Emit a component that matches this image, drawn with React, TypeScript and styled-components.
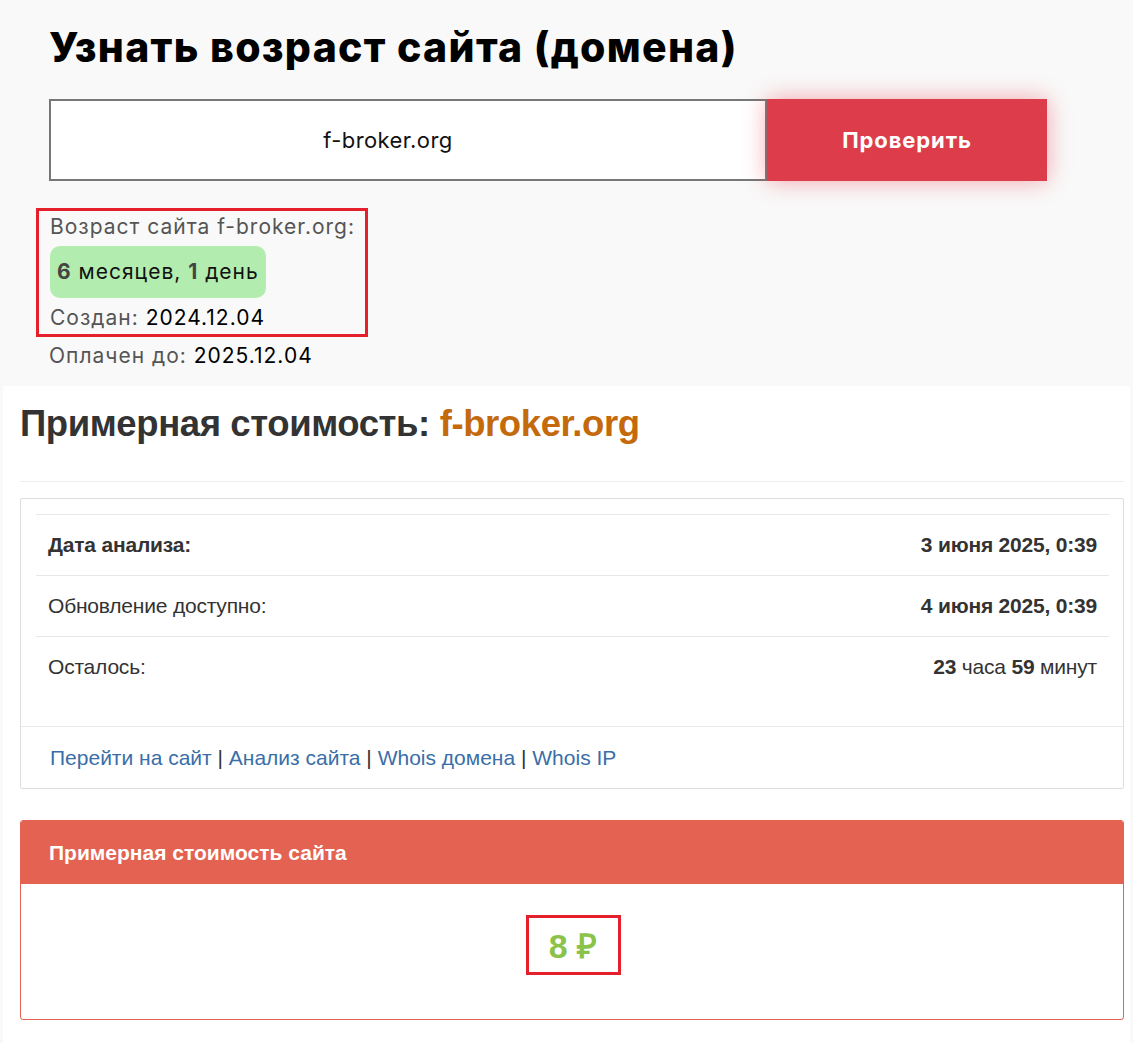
import * as React from 'react'
import styled, { createGlobalStyle } from 'styled-components';

const GlobalStyle = createGlobalStyle`
    body {
        margin: 0;
        background: #f9f9f9;
        font-family: Inter, "Open Sans", sans-serif;
    }
`;

const Page = styled.div`
    width: 1133px;
    overflow: hidden;
`;

// верхняя часть: проверка возраста
const TopSection = styled.div`
    padding: 21px 0 0 49px;
    height: 365px;
`;

const Title = styled.h1`
    margin: 0;
    font-size: 41px;
    line-height: 52px;
    font-weight: 800;
    color: #000;
    letter-spacing: 1.3px;
`;

const FormRow = styled.div`
    display: flex;
    margin-top: 26px;
    height: 82px;
`;

const DomainInput = styled.div`
    box-sizing: border-box;
    width: 718px;
    border: 2px solid #777;
    background: #fff;
    display: flex;
    align-items: center;
    justify-content: center;
    padding-right: 40px;
    font-size: 22px;
    letter-spacing: 0.4px;
    color: #111;
`;

const CheckButton = styled.button`
    width: 280px;
    border: none;
    background: #dd3c4b;
    color: #fff;
    font-family: inherit;
    font-size: 22px;
    font-weight: 700;
    letter-spacing: 0.9px;
    box-shadow: 0 0 22px rgba(235, 60, 75, 0.45);
`;

const AgeBox = styled.div`
    margin: 27px 0 0 -13px;
    width: 332px;
    box-sizing: border-box;
    border: 3px solid #e3202c;
    padding: 0 0 0 11px;
`;

const Line = styled.div`
    font-size: 21px;
    line-height: 32px;
    letter-spacing: 1px;
    color: #555;
`;

const Value = styled.span`
    color: #000;
`;

const AgePill = styled.div`
    display: inline-block;
    margin: 3px 0 4px;
    padding: 0 7px;
    height: 52px;
    line-height: 52px;
    background: #b3ecaf;
    border-radius: 10px;
    font-size: 21px;
    letter-spacing: 1px;
    color: #111;
`;

const Num = styled.b`
    color: #444;
`;

const PaidLine = styled(Line)`
    margin-top: 3px;
`;

// нижняя часть: стоимость сайта
const BottomPanel = styled.div`
    margin-left: 3px;
    width: 1127px;
    background: #fff;
    padding: 16px 6px 40px 17px;
    box-sizing: border-box;
    font-family: "Liberation Sans", Arial, sans-serif;
    color: #333;
`;

const PriceHeading = styled.h2`
    margin: 0;
    font-size: 36.5px;
    line-height: 44px;
    font-weight: 700;
    color: #333;
    letter-spacing: -0.4px;
    padding-bottom: 35px;
    border-bottom: 1px solid #eee;
`;

const Domain = styled.span`
    color: #c46a0d;
`;

const InfoCard = styled.div`
    margin-top: 16px;
    border: 1px solid #ddd;
    border-radius: 2px;
`;

const InfoTable = styled.div`
    padding: 15px 14px 29px 15px;
`;

const Row = styled.div`
    display: flex;
    justify-content: space-between;
    align-items: center;
    height: 60px;
    border-top: 1px solid #e8e8e8;
    padding: 0 12px;
    font-size: 21px;
    letter-spacing: -0.2px;
`;

const Label = styled.span<{ $bold?: boolean }>`
    font-weight: ${p => (p.$bold ? 700 : 400)};
`;

const Links = styled.div`
    border-top: 1px solid #e8e8e8;
    height: 61px;
    display: flex;
    align-items: center;
    padding-left: 29px;
    font-size: 21px;
    color: #333;
`;

const Link = styled.a`
    color: #3a6ea8;
    text-decoration: none;
`;

const PriceCard = styled.div`
    margin-top: 31px;
    border: 1px solid #e36252;
    border-radius: 3px;
    overflow: hidden;
`;

const PriceHeader = styled.div`
    background: #e36252;
    height: 63px;
    display: flex;
    align-items: center;
    padding-left: 28px;
    color: #fff;
    font-size: 21px;
    font-weight: 700;
`;

const PriceBody = styled.div`
    height: 135px;
    display: flex;
    align-items: center;
    justify-content: center;
`;

const PriceValue = styled.div`
    border: 3px solid #e3202c;
    width: 95px;
    height: 60px;
    box-sizing: border-box;
    display: flex;
    align-items: center;
    justify-content: center;
    color: #8bc34a;
    font-size: 34px;
    font-weight: 700;
    margin-top: -14px;
    margin-left: 2px;
`;

const rows = [
    { label: 'Дата анализа:', bold: true, value: <b>3 июня 2025, 0:39</b> },
    { label: 'Обновление доступно:', bold: false, value: <b>4 июня 2025, 0:39</b> },
    { label: 'Осталось:', bold: false, value: <span><b>23</b> часа <b>59</b> минут</span> },
];

export default function App() {
    return (
        <Page>
            <GlobalStyle />
            <TopSection>
                <Title>Узнать возраст сайта (домена)</Title>
                <FormRow>
                    <DomainInput>f-broker.org</DomainInput>
                    <CheckButton>Проверить</CheckButton>
                </FormRow>
                <AgeBox>
                    <Line>Возраст сайта f-broker.org:</Line>
                    <AgePill><Num>6</Num> месяцев, <Num>1</Num> день</AgePill>
                    <Line>Создан: <Value>2024.12.04</Value></Line>
                </AgeBox>
                <PaidLine>Оплачен до: <Value>2025.12.04</Value></PaidLine>
            </TopSection>
            <BottomPanel>
                <PriceHeading>Примерная стоимость: <Domain>f-broker.org</Domain></PriceHeading>
                <InfoCard>
                    <InfoTable>
                        {rows.map((r, i) => (
                            <Row key={i}>
                                <Label $bold={r.bold}>{r.label}</Label>
                                {r.value}
                            </Row>
                        ))}
                    </InfoTable>
                    <Links>
                        <Link href="#">Перейти на сайт</Link>&nbsp;|&nbsp;
                        <Link href="#">Анализ сайта</Link>&nbsp;|&nbsp;
                        <Link href="#">Whois домена</Link>&nbsp;|&nbsp;
                        <Link href="#">Whois IP</Link>
                    </Links>
                </InfoCard>
                <PriceCard>
                    <PriceHeader>Примерная стоимость сайта</PriceHeader>
                    <PriceBody>
                        <PriceValue>8 ₽</PriceValue>
                    </PriceBody>
                </PriceCard>
            </BottomPanel>
        </Page>
    );
}
